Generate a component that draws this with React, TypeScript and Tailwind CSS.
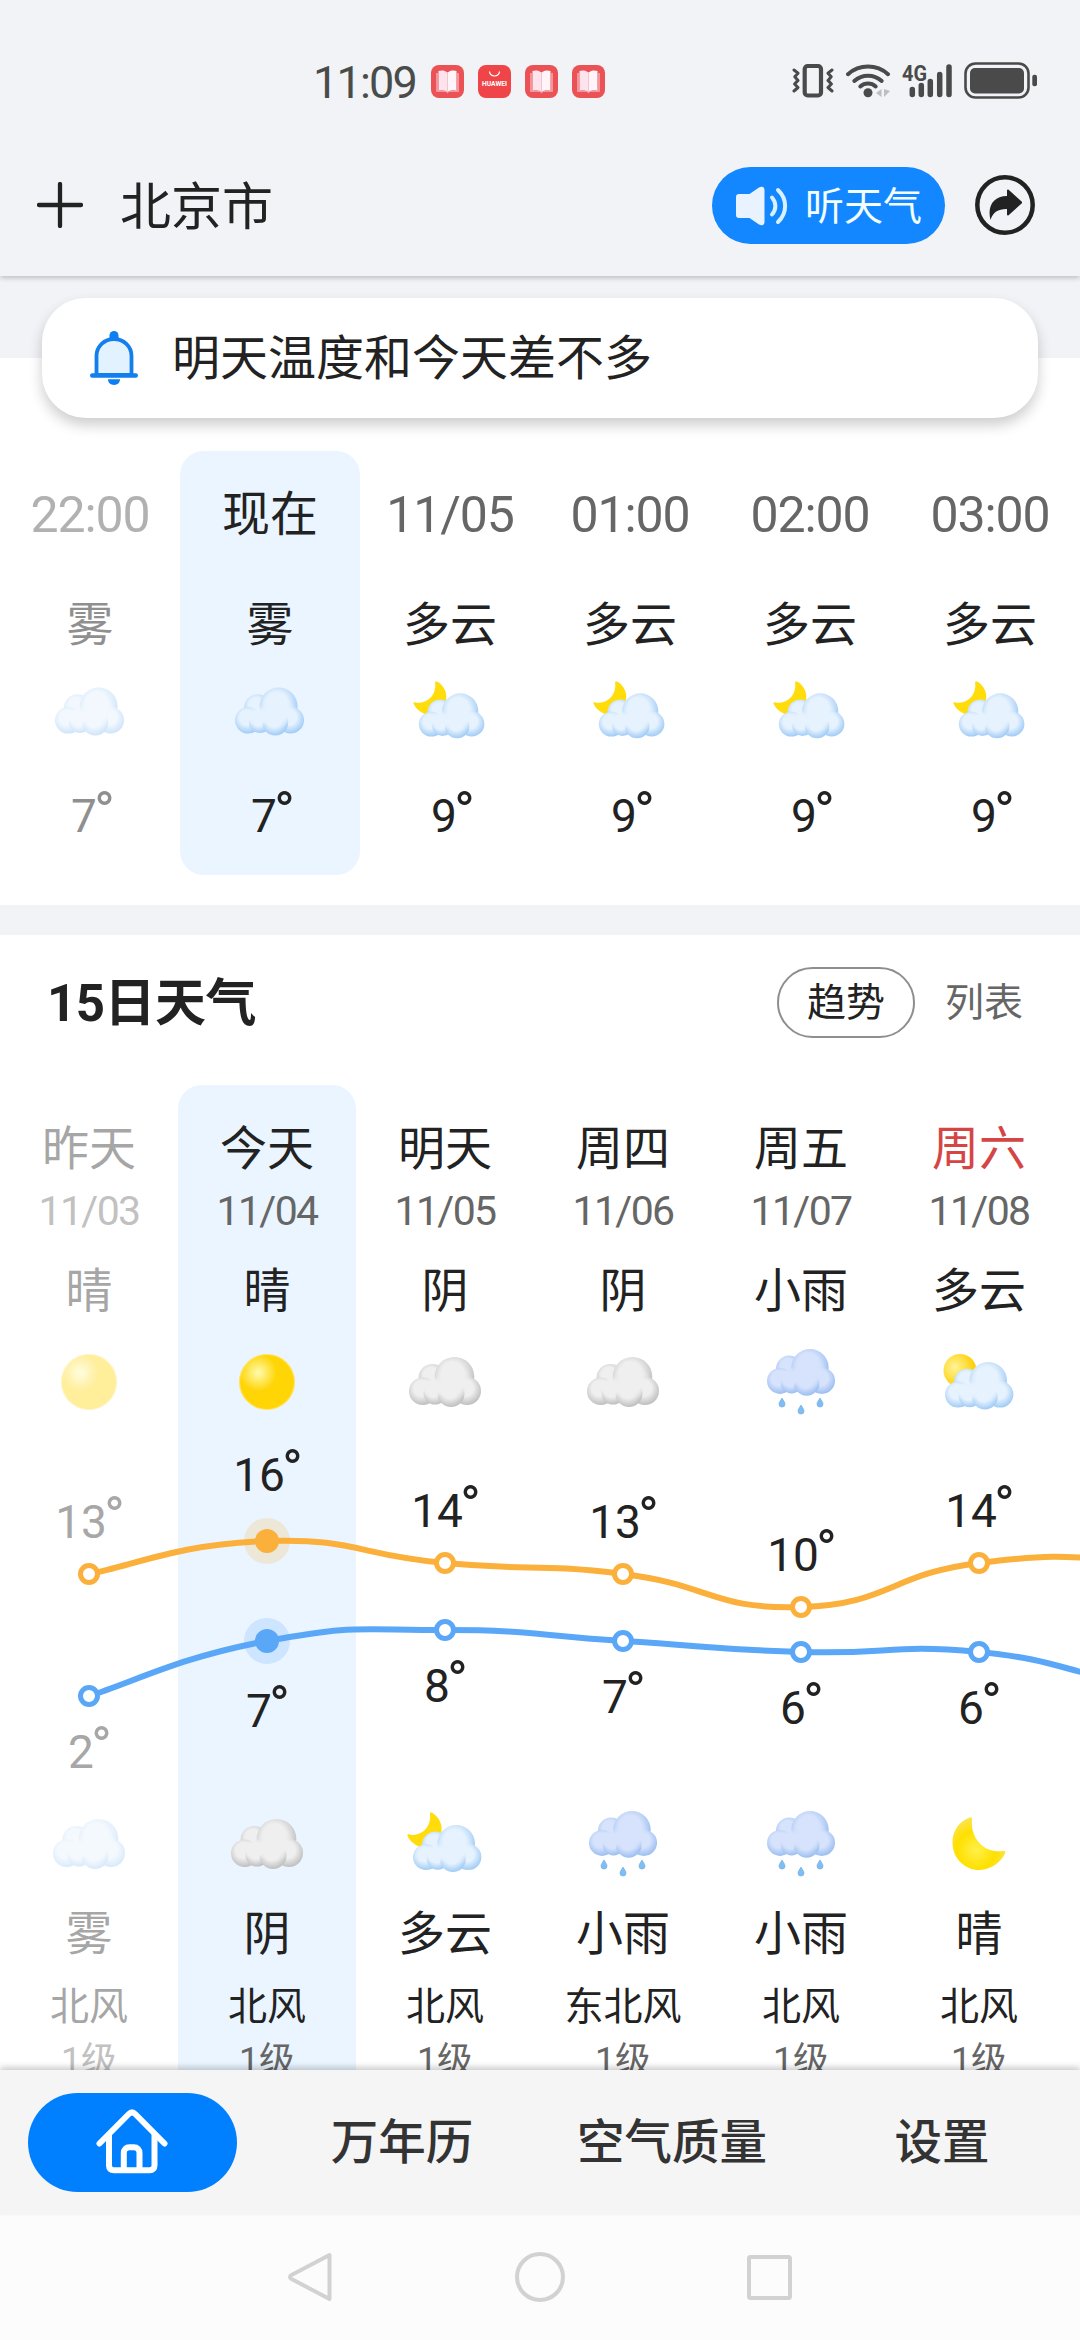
import React from "react";

type IconName =
  | "fog"
  | "overcast"
  | "rain"
  | "sun"
  | "moon"
  | "cloudyDay"
  | "cloudyNight";

type Hour = { time: string; text: string; icon: IconName; temp: number };

type Day = {
  name: string;
  date: string;
  text: string;
  icon: IconName;
  high: number;
  low: number;
  nightIcon: IconName;
  nightText: string;
  wind: string;
};

const hours: Hour[] = [
  { time: "22:00", text: "雾", icon: "fog", temp: 7 },
  { time: "现在", text: "雾", icon: "fog", temp: 7 },
  { time: "11/05", text: "多云", icon: "cloudyNight", temp: 9 },
  { time: "01:00", text: "多云", icon: "cloudyNight", temp: 9 },
  { time: "02:00", text: "多云", icon: "cloudyNight", temp: 9 },
  { time: "03:00", text: "多云", icon: "cloudyNight", temp: 9 },
];

const days: Day[] = [
  { name: "昨天", date: "11/03", text: "晴", icon: "sun", high: 13, low: 2, nightIcon: "fog", nightText: "雾", wind: "北风" },
  { name: "今天", date: "11/04", text: "晴", icon: "sun", high: 16, low: 7, nightIcon: "overcast", nightText: "阴", wind: "北风" },
  { name: "明天", date: "11/05", text: "阴", icon: "overcast", high: 14, low: 8, nightIcon: "cloudyNight", nightText: "多云", wind: "北风" },
  { name: "周四", date: "11/06", text: "阴", icon: "overcast", high: 13, low: 7, nightIcon: "rain", nightText: "小雨", wind: "东北风" },
  { name: "周五", date: "11/07", text: "小雨", icon: "rain", high: 10, low: 6, nightIcon: "rain", nightText: "小雨", wind: "北风" },
  { name: "周六", date: "11/08", text: "多云", icon: "cloudyDay", high: 14, low: 6, nightIcon: "moon", nightText: "晴", wind: "北风" },
];

/* ---------- weather icons ---------- */

const cloudTones = {
  blue: { light: "#e6f2fe", dark: "#9cc9f5" },
  gray: { light: "#efefef", dark: "#bcbcbc" },
  rain: { light: "#d7e3fc", dark: "#98bcf0" },
};

const Cloud = ({
  tone,
  transform,
}: {
  tone: keyof typeof cloudTones;
  transform: string;
}) => {
  const { light, dark } = cloudTones[tone];
  const fill = `url(#puff-${tone})`;
  return (
    <g transform={transform}>
      <defs>
        <radialGradient id={`puff-${tone}`} cx="0.45" cy="0.4" r="0.62">
          <stop offset="0.45" stopColor={light} />
          <stop offset="1" stopColor={dark} />
        </radialGradient>
        <radialGradient id={`core-${tone}`}>
          <stop offset="0.55" stopColor={light} />
          <stop offset="1" stopColor={light} stopOpacity="0" />
        </radialGradient>
      </defs>
      <circle cx="23.5" cy="21" r="14" fill={fill} />
      <circle cx="45.5" cy="19.8" r="19.8" fill={fill} />
      <circle cx="58" cy="34" r="14" fill={fill} />
      <circle cx="13.8" cy="34.2" r="13.8" fill={fill} />
      <circle cx="26" cy="36" r="11.5" fill={fill} />
      <circle cx="42" cy="36.5" r="13.5" fill={fill} />
      <ellipse cx="44" cy="25" rx="20" ry="18" fill={`url(#core-${tone})`} />
      <ellipse cx="24" cy="30" rx="16" ry="11" fill={`url(#core-${tone})`} />
    </g>
  );
};

const WeatherIcon = ({ name, size }: { name: IconName; size: number }) => (
  <svg width={size} height={size} viewBox="0 0 72 72" overflow="visible">
    <defs>
      <radialGradient id="sun-fill" cx="0.34" cy="0.33" r="0.34">
        <stop offset="0" stopColor="#fffbb0" />
        <stop offset="1" stopColor="#ffd506" />
      </radialGradient>
      <radialGradient id="moon-fill" cx="0.45" cy="0.62" r="0.6">
        <stop offset="0" stopColor="#fff04a" />
        <stop offset="0.6" stopColor="#ffe000" />
        <stop offset="1" stopColor="#fce34a" />
      </radialGradient>
      <radialGradient id="small-sun" cx="0.34" cy="0.4" r="0.6">
        <stop offset="0" stopColor="#fff59a" />
        <stop offset="1" stopColor="#ffcf05" />
      </radialGradient>
    </defs>
    {name === "fog" && <Cloud tone="blue" transform="translate(0 11)" />}
    {name === "overcast" && <Cloud tone="gray" transform="translate(0 11)" />}
    {name === "rain" && (
      <>
        <Cloud tone="rain" transform="translate(2 3) scale(0.945 0.935)" />
        {[
          [17, 52],
          [36, 59],
          [55, 52],
        ].map(([x, y]) => (
          <path
            key={x}
            d={`M${x} ${y}c1.4 2.6 3 4 3 6.1a3 3 0 0 1-6 0c0-2.1 1.6-3.5 3-6.1z`}
            fill="#7fbdf2"
            stroke="#66a8e2"
            strokeWidth="0.6"
          />
        ))}
      </>
    )}
    {name === "sun" && (
      <circle cx="36" cy="36" r="27.5" fill="url(#sun-fill)" stroke="#ffe46a" strokeWidth="1.2" />
    )}
    {name === "moon" && (
      <path
        d="M27 9.5C15 13.5 8.5 25 9.5 36.5c1 15 13.500 26 27.500 25.500 10.500-.5 20.500-7 25-16.500.9-2-.3-3-2-2.600-6.500 1.200-14.500 0-21-5.400C31.500 31 28 22 29 12c.2-2-.5-3-2-2.500z"
        fill="url(#moon-fill)"
      />
    )}
    {name === "cloudyDay" && (
      <>
        <circle cx="17" cy="24.5" r="16.5" fill="url(#small-sun)" />
        <Cloud tone="blue" transform="translate(2 16) scale(0.95)" />
      </>
    )}
    {name === "cloudyNight" && (
      <>
        <path
          d="M21 6C22 13 19 20 14 23.5C9 27 4 27.5 0 26.3C-1.5 26 -2 27 -1.3 28.3C1 33.5 6 37 11 39L32 26C34.5 17 30 9 23.5 5C22 4.2 20.8 4.5 21 6z"
          fill="#ffdc0a"
        />
        <Cloud tone="blue" transform="translate(4 17) scale(0.95 0.94)" />
      </>
    )}
  </svg>
);

/* ---------- status bar ---------- */

const BookBadge = () => (
  <svg width="33" height="33" viewBox="0 0 33 33">
    <rect width="33" height="33" rx="8" fill="#ea5256" />
    <path d="M5 8h2v17h8l1.5 1.5L18 25h8V8h2v19H18l-1.5 1.5L15 27H5z" fill="#f2959d" />
    <path d="M7.5 6c3-1 6.500-.6 9 1.500V27c-2.500-2-6-2.300-9-1.500z" fill="#fde3ec" />
    <path d="M25.5 6c-3-1-6.500-.6-9 1.500V27c2.500-2 6-2.300 9-1.500z" fill="#fff4f8" />
    <path d="M16.5 7.5V27" stroke="#f3c3d0" strokeWidth="0.8" />
  </svg>
);

const StoreBadge = () => (
  <svg width="33" height="33" viewBox="0 0 33 33">
    <rect width="33" height="33" rx="8" fill="#ef4548" />
    <path d="M11.5 6.5a5 4.5 0 0 0 10 0" fill="none" stroke="#fff" strokeWidth="1.2" />
    <text x="4" y="21.3" fontSize="6.5" fontWeight="700" fill="#fff" textLength="25" lengthAdjust="spacingAndGlyphs">
      HUAWEI
    </text>
  </svg>
);

const VibrateIcon = () => (
  <svg width="42" height="36" viewBox="0 0 42 36" fill="none" stroke="#4a4a4a">
    <rect x="12.7" y="3" width="16.3" height="29.5" rx="3" strokeWidth="4.2" />
    <path
      d="M2 7l4 3.2-3.2 3.6 3.2 3.6-3.4 3.6L6 24.5 2 28M40 7l-4 3.2 3.2 3.6-3.2 3.6 3.4 3.6-3.4 3.5 4 3.5"
      strokeWidth="3"
      strokeLinecap="round"
      strokeLinejoin="round"
    />
  </svg>
);

const WifiIcon = () => (
  <svg width="46" height="36" viewBox="0 0 46 36">
    <g fill="none" stroke="#4a4a4a" strokeWidth="4" strokeLinecap="round">
      <path d="M2 11.2a30 30 0 0 1 40 0" />
      <path d="M8.3 18a20.5 20.5 0 0 1 27.4 0" />
      <path d="M14.3 23.5a11.5 11.5 0 0 1 15.4 0" />
    </g>
    <circle cx="22" cy="29.7" r="4.5" fill="#4a4a4a" />
    <path d="M35.5 26v8l-5.500-4zM38 26v8l6-6z" fill="#bdbec0" />
  </svg>
);

const SignalIcon = () => (
  <svg width="52" height="36" viewBox="0 0 52 36" className="overflow-visible">
    <text x="1" y="17.5" fontSize="22" fontWeight="700" fill="#4a4a4a" textLength="25" lengthAdjust="spacingAndGlyphs">
      4G
    </text>
    <path
      d="M11.3 26.5v5M20.3 22.5v9M29.3 18.5v13M38.7 11.5v20M48 4v27.5"
      stroke="#4a4a4a"
      strokeWidth="5.5"
      strokeLinecap="round"
    />
  </svg>
);

const BatteryIcon = () => (
  <svg width="74" height="38" viewBox="0 0 74 38">
    <rect x="1.5" y="1.5" width="63" height="34" rx="10" fill="none" stroke="#4a4a4a" strokeWidth="2.6" />
    <rect x="6" y="6" width="54" height="25.5" rx="5" fill="#4a4a4a" />
    <rect x="68.3" y="12.7" width="4.7" height="11.5" rx="2" fill="#4a4a4a" />
  </svg>
);

const StatusBar = () => (
  <div className="flex h-[138px] items-center justify-between pt-[24px] pl-[313px] pr-[42px]">
    <div className="flex items-center gap-[14px]">
      <span className="w-[104px] pt-[2px] text-[45px] leading-none tracking-[-1.8px] text-[#4a4c4a]">
        11:09
      </span>
      <BookBadge />
      <StoreBadge />
      <BookBadge />
      <BookBadge />
    </div>
    <div className="flex items-center">
      <VibrateIcon />
      <div className="ml-3">
        <WifiIcon />
      </div>
      <div className="ml-[9px]">
        <SignalIcon />
      </div>
      <div className="ml-[11px]">
        <BatteryIcon />
      </div>
    </div>
  </div>
);

/* ---------- header ---------- */

const Header = () => (
  <div className="flex h-[138px] items-center pr-[45px] pl-[37px]">
    <svg width="46" height="46" viewBox="0 0 46 46" className="mb-[4px]">
      <path d="M23 2v42M2 23h42" stroke="#222" strokeWidth="4.3" strokeLinecap="round" />
    </svg>
    <span className="ml-[37px] text-[51px] leading-none text-[#222]">北京市</span>
    <button className="mb-[3px] ml-auto flex h-[77px] w-[233px] items-center rounded-full bg-[#1287ff] pl-6">
      <svg width="52" height="40" viewBox="0 0 52 40">
        <path
          d="M3 8h10.5L23 1.5c3-1.8 5.500-.5 5.500 2.500v32c0 3-2.500 4.300-5.500 2.500L13.500 32H3c-2 0-3-1-3-3V11c0-2 1-3 3-3z"
          fill="#e8f3ff"
        />
        <path d="M36 11.5c4.5 5 4.5 12 0 17" fill="none" stroke="#d8f0ff" strokeWidth="4" strokeLinecap="round" />
        <path d="M42 4c9.5 9 9.5 23 0 32" fill="none" stroke="#d8f0ff" strokeWidth="4" strokeLinecap="round" />
      </svg>
      <span className="mt-[3px] ml-[17px] text-[39px] leading-none text-[#f4fdff]">听天气</span>
    </button>
    <svg width="60" height="60" viewBox="0 0 60 60" className="mb-[4px] ml-[30px]">
      <circle cx="30" cy="30" r="27.7" fill="none" stroke="#222" strokeWidth="4.5" />
      <path
        d="M32 15.5c0-1 .9-1.300 1.600-.7l13 11.700c.7.600.7 1.400 0 2l-13 11.700c-.7.600-1.600.3-1.600-.7v-5.500c-8.500-.2-14 3-16.500 11C12 31 18.500 21 32 21z"
        fill="#222"
      />
    </svg>
  </div>
);

const NoticeCard = () => (
  <div className="flex h-[120px] items-center rounded-[44px] bg-white pl-12 shadow-[0_7px_14px_rgba(0,0,0,0.2)]">
    <svg width="48" height="54" viewBox="0 0 48 54">
      <rect x="19.5" y="0" width="9" height="12" rx="4.5" fill="#0a80f5" />
      <path d="M6.5 44V25a17.5 17 0 0 1 35 0v19z" fill="#e2f2ff" stroke="#127fec" strokeWidth="3.8" />
      <path d="M2.2 44.5h43.6" stroke="#127fec" strokeWidth="4.4" strokeLinecap="round" />
      <path d="M18 48.3h12c0 3.5-2.500 5.700-6 5.700s-6-2.200-6-5.700z" fill="#0a80f5" />
    </svg>
    <span className="mt-[2px] ml-[34px] text-[48px] leading-none text-[#222]">明天温度和今天差不多</span>
  </div>
);

/* ---------- hourly ---------- */

const HourColumn = ({ hour, past, active }: { hour: Hour; past: boolean; active: boolean }) => (
  <div
    className={`flex h-[424px] w-[180px] shrink-0 flex-col items-center rounded-3xl pt-[39px] text-[#222] ${
      active ? "bg-[#eaf5ff]" : ""
    }`}
  >
    <div className={`flex flex-col items-center ${past ? "opacity-50" : ""}`}>
      <div
        className={`flex h-[50px] items-center whitespace-nowrap leading-none ${
          active ? "text-[48px]" : "text-[50px] tracking-[-1.1px] text-[#666]"
        }`}
      >
        {hour.time}
      </div>
      <div className="mt-[59px] flex h-[50px] items-center text-[47px] leading-none">{hour.text}</div>
      <div className="mt-[28px] h-[69px]">
        <WeatherIcon name={hour.icon} size={69} />
      </div>
      <div className="mt-[45px] flex h-[50px] items-center pl-[2px] text-[46px] leading-none">
        {hour.temp}
        <span className="-mr-1 -ml-[3px] pb-2 text-[56px]">°</span>
      </div>
    </div>
  </div>
);

/* ---------- 15 days ---------- */

const COL = 178;
const DEG = 11;
const highY = (t: number) => 116 + (16 - t) * DEG;
const lowY = (t: number) => 205 + (8 - t) * DEG;

// smooth line, control points are a quarter of the neighbours' distance away
const smoothPath = (ys: number[]) => {
  const p = ys.map((y, i) => [COL / 2 + i * COL, y]);
  const at = (i: number) => p[Math.max(0, Math.min(p.length - 1, i))];
  let d = `M${p[0][0]} ${p[0][1]}`;
  for (let i = 0; i < p.length - 1; i++) {
    const c1x = p[i][0] + (at(i + 1)[0] - at(i - 1)[0]) / 4;
    const c1y = p[i][1] + (at(i + 1)[1] - at(i - 1)[1]) / 4;
    const c2x = p[i + 1][0] - (at(i + 2)[0] - p[i][0]) / 4;
    const c2y = p[i + 1][1] - (at(i + 2)[1] - p[i][1]) / 4;
    d += `C${c1x} ${c1y} ${c2x} ${c2y} ${p[i + 1][0]} ${p[i + 1][1]}`;
  }
  return d;
};

const TrendLine = ({
  temps,
  next,
  toY,
  color,
  below,
}: {
  temps: number[];
  next: number[];
  toY: (t: number) => number;
  color: string;
  below?: boolean;
}) => (
  <g>
    <path d={smoothPath([...temps, ...next].map(toY))} fill="none" stroke={color} strokeWidth="6" />
    {temps.map((t, i) => {
      const x = COL / 2 + i * COL;
      const y = toY(t);
      const today = i === 1;
      const offset = below ? (today ? 86 : 72) : today ? -50 : -36;
      return (
        <g key={i}>
          {today ? (
            <>
              <circle cx={x} cy={y} r="23" fill={color} opacity="0.2" />
              <circle cx={x} cy={y} r="12" fill={color} />
            </>
          ) : (
            <circle cx={x} cy={y} r="8.5" fill="#fff" stroke={color} strokeWidth="5" />
          )}
          <text
            x={x + 1}
            y={y + offset}
            fontSize="46"
            textAnchor="middle"
            fill={i === 0 ? "#a7a7a7" : "#222"}
          >
            {t}
            <tspan fontSize="56" dx="-3" dy="-2">
              °
            </tspan>
          </text>
        </g>
      );
    })}
  </g>
);

const DayColumn = ({ day, past, active }: { day: Day; past: boolean; active: boolean }) => (
  <div
    className={`flex w-[178px] shrink-0 flex-col items-center rounded-t-3xl pt-[38px] text-[#222] ${
      active ? "bg-[#eaf5ff]" : ""
    }`}
  >
    <div className={`flex flex-col items-center whitespace-nowrap leading-none ${past ? "opacity-40" : ""}`}>
      <div className={`flex h-[50px] items-center text-[47px] ${day.name === "周六" ? "text-[#d64545]" : ""}`}>
        {day.name}
      </div>
      <div className="mt-[18px] flex h-10 items-center text-[41px] tracking-[-1.6px] text-[#666]">{day.date}</div>
      <div className="mt-[34px] flex h-[50px] items-center text-[47px]">{day.text}</div>
      <div className="mt-[31px] h-[72px]">
        <WeatherIcon name={day.icon} size={72} />
      </div>
      <div className="mt-[390px] h-[72px]">
        <WeatherIcon name={day.nightIcon} size={72} />
      </div>
      <div className="mt-[28px] flex h-[50px] items-center text-[47px]">{day.nightText}</div>
      <div className="mt-[29px] flex h-10 items-center text-[39px]">{day.wind}</div>
      <div className="mt-[14px] flex h-10 items-center text-[36px] text-[#666]">1级</div>
    </div>
  </div>
);

/* ---------- bottom ---------- */

const TabBar = () => (
  <div className="relative h-[144px] shrink-0 bg-[#f5f5f5] shadow-[0_-3px_6px_rgba(0,0,0,0.2)]">
    <div className="-ml-[3px] grid h-full w-[1080px] grid-cols-4 place-items-center text-[47.5px] font-medium leading-none text-[#333]">
      <button className="flex h-[99px] w-[209px] items-center justify-center rounded-full bg-[#0080ff]">
        <svg width="72" height="66" viewBox="0 0 72 66" fill="none" stroke="#fff" strokeLinecap="round" strokeLinejoin="round">
          <path d="M3.5 34.5L32.8 5c2.200-2.200 4.200-2.200 6.400 0L68.500 34.500" strokeWidth="6" />
          <path d="M13 26v30.500c0 3 1.800 4.800 4.800 4.800h36c3 0 4.700-1.800 4.700-4.800V26" strokeWidth="6" />
          <path d="M27.8 61V44c0-3.500 2.200-5.700 5.700-5.700h4.300c3.500 0 5.700 2.200 5.700 5.700v17" strokeWidth="6" />
        </svg>
      </button>
      <span className="mt-[4px]">万年历</span>
      <span className="mt-[4px]">空气质量</span>
      <span className="mt-[4px]">设置</span>
    </div>
  </div>
);

const SystemNav = () => (
  <div className="flex h-[126px] shrink-0 items-center justify-between bg-[#fcfcfc] pr-[288px] pl-[287px]">
    <svg width="46" height="52" viewBox="0 0 46 52" fill="none" stroke="#d2d2d2" strokeWidth="4" strokeLinejoin="round">
      <path d="M42.5 4v44L4.5 28c-2-1.200-2-2.800 0-4z" />
    </svg>
    <svg width="50" height="50" viewBox="0 0 50 50" fill="none" stroke="#d2d2d2" strokeWidth="4">
      <circle cx="25" cy="25" r="23" />
    </svg>
    <svg width="45" height="45" viewBox="0 0 45 45" fill="none" stroke="#d2d2d2" strokeWidth="4">
      <rect x="2" y="2" width="41" height="41" rx="1.5" />
    </svg>
  </div>
);

const App: React.FC = () => {
  return (
    <div className="flex h-[2340px] w-[1080px] flex-col overflow-hidden bg-white font-[Roboto,'Noto_Sans_CJK_SC',sans-serif]">
      <header className="relative z-10 h-[276px] shrink-0 bg-[#f1f3f7] shadow-[0_2px_5px_rgba(0,0,0,0.22)]">
        <StatusBar />
        <Header />
      </header>

      {/* HOURLY */}
      <section className="h-[629px] shrink-0 bg-[linear-gradient(#f1f3f7_82px,#fff_82px)] pt-[22px]">
        <div className="px-[42px]">
          <NoticeCard />
        </div>
        <div className="mt-[33px] flex">
          {hours.map((hour, i) => (
            <HourColumn key={hour.time} hour={hour} past={i === 0} active={i === 1} />
          ))}
        </div>
      </section>

      <div className="h-[30px] shrink-0 bg-[#f1f3f7]" />

      {/* 15 DAYS */}
      <section className="flex h-[1135px] shrink-0 flex-col overflow-hidden">
        <div className="flex h-[150px] shrink-0 items-center pr-[57px] pb-[15px] pl-[47px]">
          <h2 className="mt-[2px] text-[51px] font-bold leading-none tracking-[-0.5px] text-[#222]">15日天气</h2>
          <button className="ml-auto flex h-[71px] w-[138px] items-center justify-center rounded-full border-2 border-[#8e8e8e] pt-[2px] text-[39px] leading-none text-[#222]">
            趋势
          </button>
          <button className="mt-[2px] ml-[30px] text-[39px] leading-none text-[#666]">列表</button>
        </div>
        <div className="relative flex h-[985px] shrink-0">
          {days.map((day, i) => (
            <DayColumn key={day.date} day={day} past={i === 0} active={i === 1} />
          ))}
          <svg className="absolute top-[340px] left-0" width="1080" height="370" viewBox="0 0 1080 370">
            <TrendLine temps={days.map((d) => d.high)} next={[14, 12]} toY={highY} color="#fbb03b" />
            <TrendLine temps={days.map((d) => d.low)} next={[3, 3]} toY={lowY} color="#5aa7f8" below />
          </svg>
        </div>
      </section>

      <TabBar />
      <SystemNav />
    </div>
  );
};

export default App;
